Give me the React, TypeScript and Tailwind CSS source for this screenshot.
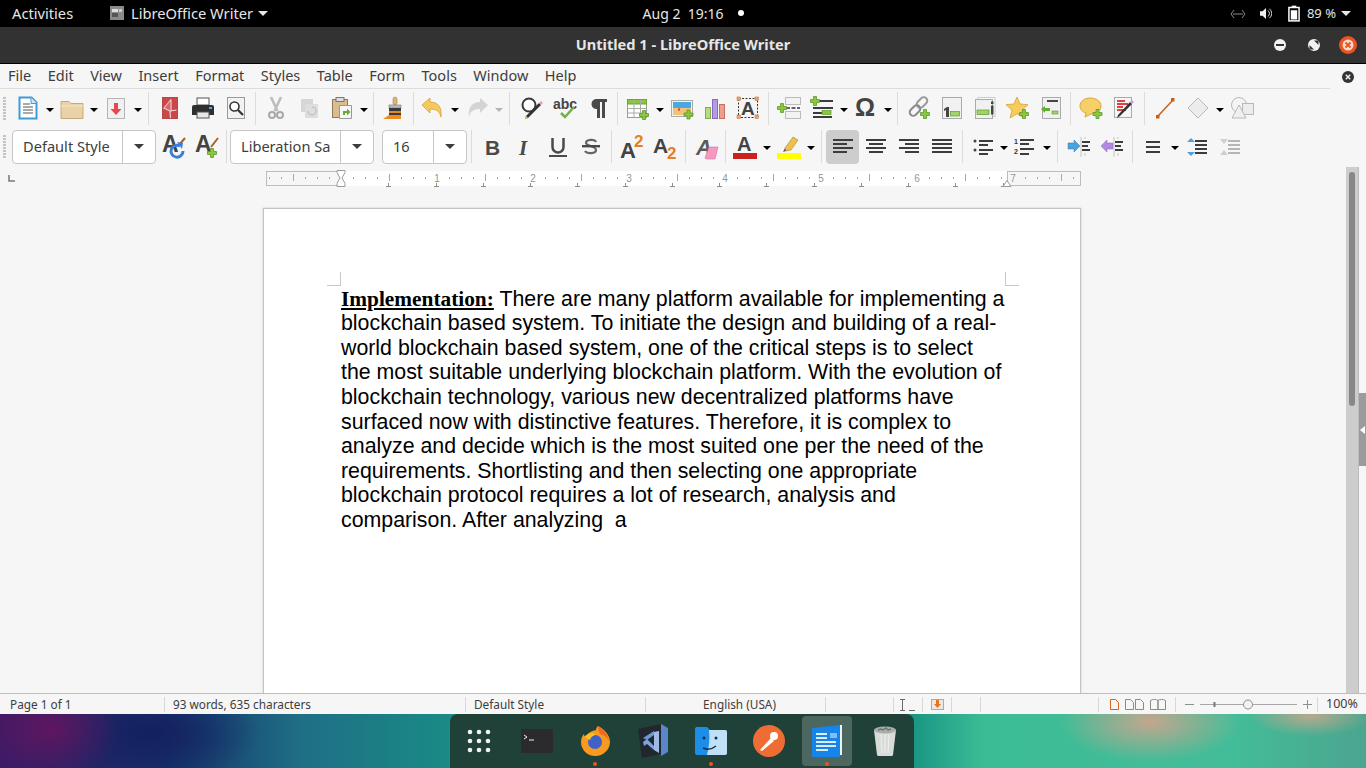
import type { ReactNode } from "react";

const Svg = ({ children, size = 24 }: { children: ReactNode; size?: number }) => (
    <svg width={size} height={size} viewBox="0 0 24 24" fill="none" overflow="visible">
        {children}
    </svg>
);

const Plus = ({ x, y }: { x: number; y: number }) => (
    <path
        d={`M${x - 1.5} ${y - 4.5}h3v3h3v3h-3v3h-3v-3h-3v-3h3z`}
        fill="#8cc63f"
        stroke="#5b9a2a"
        strokeWidth="0.8"
    />
);

const Letter = ({ x = 1, y = 19, size = 22, fill = "#434343" }: { x?: number; y?: number; size?: number; fill?: string }) => (
    <text x={x} y={y} fontSize={size} fontWeight="700" fill={fill} fontFamily="Liberation Sans, sans-serif">
        A
    </text>
);

const Lines = ({ rows, color = "#3c3c3c" }: { rows: [number, number, number][]; color?: string }) => (
    <>
        {rows.map(([x, y, w], i) => (
            <rect key={i} x={x} y={y} width={w} height="2" fill={color} />
        ))}
    </>
);

const icons: Record<string, ReactNode> = {
    newDoc: (
        <>
            <path d="M3.500 1.500h12l5 5v16h-17z" fill="#fff" stroke="#3f9bd8" strokeWidth="2" />
            <path d="M15 1.500v6h6" fill="#cfe6f6" stroke="#3f9bd8" strokeWidth="1" />
            <Lines rows={[[7, 7, 7], [7, 10, 10], [7, 13, 10], [7, 16, 10]]} color="#a9a9a9" />
        </>
    ),
    open: (
        <>
            <path d="M1 5.500h8l2 2h12v15H1z" fill="#e9d2a6" stroke="#c2ab81" />
            <path d="M1 10h22" stroke="#f6e8cc" />
        </>
    ),
    save: (
        <>
            <rect x="3.500" y="2.500" width="17" height="20" fill="#f0f0f0" stroke="#b5b5b5" />
            <path d="M10 7h4v6h3.500L12 19l-5.500-6H10z" fill="#e5484d" />
        </>
    ),
    pdf: (
        <>
            <rect x="4.500" y="1.500" width="15" height="21" fill="#cc4848" stroke="#b24a4a" />
            <path d="M13 3.500L6 12l6 3 .5 7M13 3.500V15M12.500 15l6-1" stroke="#f6dcdc" strokeWidth="1.100" />
            <path d="M6 12l6-8.500V15z" fill="#e88" opacity=".5" />
        </>
    ),
    print: (
        <>
            <rect x="6" y="2" width="12" height="7" fill="#fff" stroke="#555" />
            <path d="M3 9h18a2 2 0 0 1 2 2v8H1v-8a2 2 0 0 1 2-2z" fill="#2f2f2f" />
            <rect x="18" y="11" width="3" height="2" fill="#3fb0e8" />
            <rect x="6" y="16" width="12" height="6" fill="#e8e8e8" stroke="#555" />
        </>
    ),
    preview: (
        <>
            <rect x="3.500" y="1.500" width="17" height="21" fill="#f2f2f2" stroke="#9a9a9a" />
            <circle cx="10.500" cy="10.500" r="4.500" fill="#fff" stroke="#333" strokeWidth="1.600" />
            <path d="M14 14l5 5" stroke="#333" strokeWidth="2.200" />
        </>
    ),
    cut: (
        <>
            <path d="M7 1l6.500 14M17 1l-6.500 14" stroke="#bdbdbd" strokeWidth="2.600" />
            <circle cx="8" cy="19" r="3" stroke="#a8a8a8" strokeWidth="2" />
            <circle cx="16" cy="19" r="3" stroke="#a8a8a8" strokeWidth="2" />
        </>
    ),
    copy: (
        <>
            <rect x="4" y="3" width="12" height="13" fill="#d6d6d6" />
            <rect x="8" y="8" width="13" height="14" fill="#dedede" />
            <path d="M15 11a4 4 0 1 1-4 4" stroke="#c4c4c4" strokeWidth="1.500" />
        </>
    ),
    paste: (
        <>
            <rect x="2.500" y="3.500" width="15" height="18" fill="#d9bd8c" stroke="#8f7b5c" />
            <rect x="6" y="1.500" width="8" height="4" fill="#ddd" stroke="#777" />
            <path d="M9.500 9.500h12v13h-12z" fill="#f7f7f7" stroke="#999" />
            <path d="M13 15h4v-2.500l3.500 3.500-3.500 3.500V17h-2v2h-2z" fill="#63ad2f" />
        </>
    ),
    brush: (
        <>
            <rect x="10" y="1" width="4" height="8" rx="2" fill="#d9b57a" stroke="#a8844e" strokeWidth=".6" />
            <rect x="6" y="9" width="12" height="3" fill="#bbb" stroke="#777" strokeWidth=".6" />
            <path d="M6 12h12v7H6z" fill="#3a3a3a" />
            <path d="M6 15h12v2H6z" fill="#d98a2b" />
            <path d="M0 23c2-1 4-3 6-4h12v4z" fill="#f08a1d" />
        </>
    ),
    undo: <path d="M1 9l8-7v4c8 0 12 5 11 15-1-5-4-8-11-8v4z" fill="#f6c95c" stroke="#d8a030" strokeWidth=".8" />,
    redo: <path d="M23 9l-8-7v4C7 6 3 11 4 21c1-5 4-8 11-8v4z" fill="#d4d4d4" />,
    find: (
        <>
            <circle cx="9" cy="9" r="6.500" fill="#fff" stroke="#3a3a3a" strokeWidth="2" />
            <path d="M21 9L8 22l-3 1 1-3L19 7z" fill="#333" />
            <path d="M19 7l2 2 2-2-2-2z" fill="#e79ad0" />
            <path d="M5 23l1-3 2 2z" fill="#f0d080" />
        </>
    ),
    spell: (
        <>
            <text x="0" y="13" fontSize="14" fontWeight="700" fill="#444" fontFamily="Liberation Sans, sans-serif">
                abc
            </text>
            <path d="M8 17l4 4 9-10" stroke="#72b043" strokeWidth="2.500" />
        </>
    ),
    pilcrow: <path d="M10 3h11v3h-2v16h-3V6h-2v16h-3v-9a5 5 0 0 1-1-10z" fill="#4a4a4a" />,
    table: (
        <>
            <rect x="1.500" y="3.500" width="19" height="18" fill="#fff" stroke="#999" />
            <rect x="1.500" y="3.500" width="19" height="4.500" fill="#8cc63f" stroke="#6ba32e" />
            <path d="M8 3.500v18M14.500 3.500v18M1.500 12.500h19M1.500 17h19" stroke="#aaa" />
            <Plus x={18} y={19} />
        </>
    ),
    image: (
        <>
            <rect x="1.500" y="4.500" width="21" height="16" fill="#f3f3f3" stroke="#aaa" />
            <rect x="3" y="6" width="18" height="6" fill="#4aa7e0" />
            <path d="M3 12h18v7H3z" fill="#f1c27a" />
            <rect x="8" y="12.500" width="2" height="2" fill="#d33" />
            <Plus x={18.500} y={18.500} />
        </>
    ),
    chart: (
        <>
            <rect x="2.500" y="11.500" width="5" height="11" fill="#b5dc7e" stroke="#80ad47" />
            <rect x="9.500" y="3.500" width="5" height="19" fill="#b79be0" stroke="#8a6bc2" />
            <rect x="16.500" y="8.500" width="5" height="14" fill="#eaa08f" stroke="#c9705d" />
        </>
    ),
    textbox: (
        <>
            <rect x="2.500" y="2.500" width="19" height="19" stroke="#333" strokeDasharray="2 1.500" />
            <Letter x={5} y={19} size={19} />
            {[[1, 1], [19, 1], [1, 19], [19, 19]].map(([x, y]) => (
                <rect key={x + "-" + y} x={x} y={y} width="3.500" height="3.500" fill="#f0a070" stroke="#c76b2d" strokeWidth=".5" />
            ))}
        </>
    ),
    pageBreak: (
        <>
            <rect x="8.500" y="1.500" width="15" height="7" fill="#f2f2f2" stroke="#bbb" />
            <rect x="8.500" y="15.500" width="15" height="7" fill="#f2f2f2" stroke="#bbb" />
            <path d="M9 12h14" stroke="#666" strokeWidth="2" strokeDasharray="4 1.500" />
            <Plus x={5} y={12} />
        </>
    ),
    field: (
        <>
            <Lines rows={[[8, 4, 15], [3, 11, 20], [3, 16, 9], [3, 20, 19]]} />
            <Plus x={5} y={5} />
            <rect x="12" y="14.500" width="9" height="4" fill="#8cc63f" stroke="#5b9a2a" strokeWidth=".7" />
        </>
    ),
    omega: (
        <text x="1" y="20" fontSize="25" fontWeight="700" fill="#444" fontFamily="Liberation Sans, sans-serif">
            Ω
        </text>
    ),
    link: (
        <>
            <rect x="9" y="3" width="12" height="7" rx="3.500" transform="rotate(-45 15 6.500)" stroke="#9a9a9a" strokeWidth="2" />
            <rect x="2" y="11" width="12" height="7" rx="3.500" transform="rotate(-45 8 14.500)" stroke="#8a8a8a" strokeWidth="2" />
            <Plus x={18} y={18} />
        </>
    ),
    footnote: (
        <>
            <rect x="2.500" y="1.500" width="19" height="21" fill="#f1f1f1" stroke="#aaa" />
            <path d="M4 13l3-2h2v10H6v-7l-2 1z" fill="#444" />
            <rect x="10.500" y="15.500" width="9" height="4.500" fill="#a4d168" stroke="#5b9a2a" strokeWidth=".7" />
        </>
    ),
    endnote: (
        <>
            <rect x="5" y="1.500" width="17" height="19" fill="#fafafa" stroke="#ccc" />
            <rect x="2.500" y="3.500" width="17" height="19" fill="#f1f1f1" stroke="#aaa" />
            <rect x="4" y="14" width="12" height="4.500" fill="#a4d168" stroke="#5b9a2a" strokeWidth=".7" />
            <rect x="18" y="5.500" width="2.500" height="2.500" fill="#444" />
            <rect x="18" y="9.500" width="2.500" height="9" fill="#444" />
        </>
    ),
    star: (
        <>
            <path d="M11 1l3 7 8 .7-6 5.300 2 8-7-4.300L4 22l2-8-6-5.300L8 8z" fill="#f6cd5a" stroke="#d5a32c" strokeWidth=".8" />
            <Plus x={18} y={18} />
        </>
    ),
    xref: (
        <>
            <rect x="3.500" y="1.500" width="18" height="21" fill="#f1f1f1" stroke="#aaa" />
            <rect x="8" y="4" width="11" height="2" fill="#444" />
            <path d="M2 13l4-3v2h5v3H6v2z" fill="#63ad2f" />
            <rect x="13" y="15" width="6" height="3" fill="#a4d168" stroke="#5b9a2a" strokeWidth=".6" />
        </>
    ),
    comment: (
        <>
            <path d="M11 2c6 0 11 3 11 8s-5 8-10 8l-6 3 1-4c-4-1-6-4-6-7 0-5 5-8 10-8z" fill="#f6cf68" stroke="#d8a938" />
            <Plus x={18.500} y={18} />
        </>
    ),
    track: (
        <>
            <rect x="2.500" y="1.500" width="17" height="20" fill="#f6f6f6" stroke="#aaa" />
            <Lines rows={[[5, 4, 8], [5, 7, 11], [5, 10, 6], [5, 13, 9]]} color="#e04040" />
            <path d="M20 8L8 20l-3 2 1-3L18 6z" fill="#333" />
            <path d="M18 6l2 2 2-2-2-2z" fill="#d99ad0" />
        </>
    ),
    line: (
        <>
            <path d="M5 20L20 4" stroke="#c85f14" strokeWidth="1.400" />
            <rect x="18" y="2" width="3.500" height="3.500" fill="#c85f14" />
            <rect x="3" y="19" width="3.500" height="3.500" fill="#c85f14" />
        </>
    ),
    diamond: <path d="M12 2l10 10-10 10L2 12z" fill="#ececec" stroke="#b8b8b8" />,
    shapes: (
        <>
            <circle cx="9" cy="9" r="7.500" fill="#f4f4f4" stroke="#b8b8b8" />
            <rect x="12.500" y="7.500" width="11" height="11" fill="#ececec" stroke="#b8b8b8" />
            <path d="M9 9l7 13H2z" fill="#f0f0f0" stroke="#b8b8b8" />
        </>
    ),
    updateStyle: (
        <>
            <Letter x={0} y={17} size={23} />
            <path d="M23 3l-6 7" stroke="#a5622a" strokeWidth="2" />
            <path d="M21 16a6 6 0 1 1-3-5" stroke="#3b7fd9" strokeWidth="3" />
            <path d="M15 7l6 1-1 6z" fill="#3b7fd9" />
        </>
    ),
    newStyle: (
        <>
            <Letter x={0} y={17} size={23} />
            <path d="M23 3l-7 9" stroke="#a5622a" strokeWidth="2" />
            <Plus x={17} y={18} />
        </>
    ),
    bold: (
        <text x="5" y="20" fontSize="21" fontWeight="700" fill="#4a4a4a" fontFamily="Liberation Sans, sans-serif">
            B
        </text>
    ),
    italic: (
        <text x="6" y="20" fontSize="21" fontWeight="700" fontStyle="italic" fill="#4a4a4a" fontFamily="Liberation Serif, serif">
            I
        </text>
    ),
    underline: (
        <>
            <path d="M6.500 3v9a5.500 5.500 0 0 0 11 0V3" stroke="#4a4a4a" strokeWidth="2.500" />
            <rect x="3" y="20" width="18" height="2" fill="#4a4a4a" />
        </>
    ),
    strike: (
        <>
            <path d="M17 7c-1-3-10-3-10 1 0 3 10 3 10 7 0 4-9 4-11 1" stroke="#666" strokeWidth="2.200" />
            <rect x="3" y="10" width="18" height="2.400" fill="#4a4a4a" />
        </>
    ),
    sup: (
        <>
            <Letter x={0} y={23} size={22} />
            <text x="14" y="12" fontSize="17" fontWeight="700" fill="#e67e22" fontFamily="Liberation Sans, sans-serif">
                2
            </text>
        </>
    ),
    sub: (
        <>
            <Letter x={0} y={18} size={21} />
            <text x="14" y="24" fontSize="17" fontWeight="700" fill="#e67e22" fontFamily="Liberation Sans, sans-serif">
                2
            </text>
        </>
    ),
    clear: (
        <>
            <text x="2" y="20" fontSize="22" fontWeight="700" fontStyle="italic" fill="#5a5a5a" fontFamily="Liberation Sans, sans-serif">
                A
            </text>
            <path d="M11 23l4-11h9l-3 12h-9z" fill="#f29ac2" stroke="#de6fa3" strokeWidth=".6" />
        </>
    ),
    fontColor: (
        <>
            <Letter x={4} y={16} size={20} />
            <rect x="0" y="18" width="24" height="6" fill="#c9211e" />
        </>
    ),
    highlight: (
        <>
            <path d="M8 13L16 2l5 3-7 10-5 1z" fill="#eac14f" stroke="#b8922c" strokeWidth=".7" />
            <path d="M8 13l1 3-3 1z" fill="#555" />
            <rect x="0" y="18" width="24" height="6" fill="#ffff00" />
        </>
    ),
    alignLeft: <Lines rows={[[2, 4, 20], [2, 8, 14], [2, 12, 20], [2, 16, 14]]} />,
    alignCenter: <Lines rows={[[2, 4, 20], [5, 8, 14], [2, 12, 20], [5, 16, 14]]} />,
    alignRight: <Lines rows={[[2, 4, 20], [8, 8, 14], [2, 12, 20], [8, 16, 14]]} />,
    justify: <Lines rows={[[2, 4, 20], [2, 8, 20], [2, 12, 20], [2, 16, 20]]} />,
    bullets: (
        <>
            <circle cx="4" cy="6" r="1.500" fill="#444" />
            <circle cx="4" cy="15" r="1.500" fill="#444" />
            <Lines rows={[[8, 5, 14], [8, 9, 9], [8, 14, 14], [8, 18, 9]]} />
        </>
    ),
    numbering: (
        <>
            <text x="1" y="9" fontSize="7" fontWeight="700" fill="#333" fontFamily="Liberation Sans, sans-serif">
                1
            </text>
            <text x="1" y="19" fontSize="7" fontWeight="700" fill="#333" fontFamily="Liberation Sans, sans-serif">
                2
            </text>
            <Lines rows={[[7, 4, 14], [7, 8, 9], [7, 13, 14], [7, 18, 9]]} />
        </>
    ),
    indentInc: (
        <>
            <Lines rows={[[15, 6, 8], [15, 10, 6], [15, 14, 8]]} />
            <path d="M14 2v20M18 2v2M18 18v3" stroke="#c4c4c4" />
            <path d="M1 8h6V5l6 6-6 6v-3H1z" fill="#4aa3df" stroke="#3178b5" strokeWidth=".5" />
        </>
    ),
    indentDec: (
        <>
            <Lines rows={[[15, 6, 8], [15, 10, 6], [15, 14, 8]]} />
            <path d="M14 2v20M18 2v2M18 18v3" stroke="#c4c4c4" />
            <path d="M13 8H7V5l-6 6 6 6v-3h6z" fill="#b28be0" stroke="#8b62c0" strokeWidth=".5" />
        </>
    ),
    spacing: <Lines rows={[[5, 6, 14], [5, 11, 14], [5, 16, 14]]} />,
    paraInc: (
        <>
            <Lines rows={[[10, 5, 12], [10, 9, 12], [10, 13, 12], [10, 17, 12]]} />
            <path d="M6 3l4 4H2zM6 21l4-4H2z" fill="#4aa3df" />
        </>
    ),
    paraDec: (
        <>
            <Lines rows={[[10, 5, 12], [10, 9, 12], [10, 13, 12], [10, 17, 12]]} color="#b5b5b5" />
            <path d="M2 4h8l-4 5zM2 20h8l-4-5z" fill="#cfcfcf" />
        </>
    ),
};

const Tool = ({ name, active }: { name: string; active?: boolean }) => (
    <div className={`flex h-[34px] w-[33px] items-center justify-center rounded ${active ? "bg-[#cdcdcd]" : ""}`}>
        <Svg>{icons[name]}</Svg>
    </div>
);

const Caret = ({ dim, narrow }: { dim?: boolean; narrow?: boolean }) => (
    <div className={`flex items-center justify-center pt-[3px] ${narrow ? "w-[9px]" : "w-[11px]"}`}>
        <div
            className={`h-0 w-0 border-x-[4px] border-t-[4px] border-x-transparent ${dim ? "border-t-[#b5b5b5]" : "border-t-black"}`}
        />
    </div>
);

const Sep = ({ className }: { className: string }) => (
    <div className={`flex h-[33px] justify-center ${className}`}>
        <div className="h-full w-px bg-[#dcdcdc]" />
    </div>
);

const Grip = () => (
    <div className="flex w-[5px] flex-col gap-[1px]">
        {[0, 1, 2, 3, 4, 5, 6, 7].map((i) => (
            <div key={i} className="h-[2px] w-[3px] bg-[#c4c4c4]" />
        ))}
    </div>
);

const Combo = ({ label, width, field }: { label: string; width: string; field: string }) => (
    <div className={`flex h-[34px] items-center rounded-[4px] border border-[#c6c6c6] bg-white text-[14.6px] text-[#3d3d3d] ${width}`}>
        <div className={`whitespace-nowrap pl-[10px] ${field}`}>{label}</div>
        <div className="flex h-full flex-1 items-center justify-center border-l border-[#c6c6c6]">
            <div className="h-0 w-0 border-x-[5px] border-t-[5px] border-x-transparent border-t-[#3d3d3d]" />
        </div>
    </div>
);

const Ruler = () => {
    const minor = Array.from({ length: 68 }, (_, i) => i * 12 + 3);
    const tabs = Array.from({ length: 14 }, (_, i) => 75 + 47.25 * (i + 1));
    return (
        <svg width="816" height="18" viewBox="0 0 816 18" fill="none">
            <rect x="75" y="1" width="666" height="15" fill="#fff" />
            <rect x="0.500" y="1.500" width="74" height="14" stroke="#bcbcbc" />
            <rect x="741.500" y="1.500" width="73" height="14" stroke="#bcbcbc" />
            {minor.map((x) => {
                const n = Math.round((x - 75 + 96 * 3) / 12);
                if (n % 8 === 0) return null;
                const long = n % 4 === 0;
                return <path key={x} d={`M${x + 0.5} ${long ? 4 : 7}v${long ? 7 : 2}`} stroke="#a8a8a8" />;
            })}
            {tabs.map((x) => (
                <path key={x} d={`M${Math.round(x) + 0.5} 13v3M${Math.round(x) - 2} 16.500h5`} stroke="#8e8e8e" />
            ))}
            {[1, 2, 3, 4, 5, 6, 7].map((n) => (
                <text key={n} x={75 + n * 96} y="12" fontSize="10" textAnchor="middle" fill="#8b98a8" fontFamily="Liberation Sans, sans-serif">
                    {n}
                </text>
            ))}
            <path d="M71 0.500h8v2l-3 5.500 3 5.500v3h-8v-3l3-5.500-3-5.500z" fill="#fff" stroke="#9a9a9a" />
            <path d="M737 16.500l4-6 4 6z" fill="#fff" stroke="#9a9a9a" />
        </svg>
    );
};

const docLines = [
    "blockchain based system. To initiate the design and building of a real-",
    "world blockchain based system, one of the critical steps is to select",
    "the most suitable underlying blockchain platform. With the evolution of",
    "blockchain technology, various new decentralized platforms have",
    "surfaced now with distinctive features. Therefore, it is complex to",
    "analyze and decide which is the most suited one per the need of the",
    "requirements. Shortlisting and then selecting one appropriate",
    "blockchain protocol requires a lot of research, analysis and",
    "comparison. After analyzing  a",
];

const Page = () => (
    <div className="relative h-[600px] w-[818px] border border-[#c4c4c4] bg-white pl-[77px] pt-[77.88px] font-['Liberation_Sans',sans-serif] text-[21.33px] leading-[24.53px] text-black shadow-[0_0_2px_rgba(0,0,0,0.2)]">
        <div className="absolute left-[63px] top-[63px] h-[14px] w-[14px] border-b border-r border-[#c8c8c8]" />
        <div className="absolute left-[741px] top-[63px] h-[14px] w-[14px] border-b border-l border-[#c8c8c8]" />
        <div className="whitespace-pre">
            <span className="font-['Liberation_Serif',serif] font-bold underline">Implementation:</span> There are many platform available for implementing a
        </div>
        {docLines.map((line) => (
            <div key={line} className="whitespace-pre">
                {line}
            </div>
        ))}
    </div>
);

const StatusCell = ({ width, children, center }: { width: string; children?: ReactNode; center?: boolean }) => (
    <div className={`flex h-full items-center ${width}`}>
        <div className={`flex h-[15px] w-full items-center gap-[3px] border-l border-[#d8d8d8] pl-[8px] ${center ? "justify-center pl-0" : ""}`}>
            {children}
        </div>
    </div>
);

const PageGlyph = ({ color = "#8a8a8a", double }: { color?: string; double?: boolean }) => (
    <svg width={double ? 19 : 9} height="11" viewBox={double ? "0 0 19 11" : "0 0 9 11"} fill="none">
        <path d="M0.500 0.500h5l3 3v7h-8z" stroke={color} />
        {double && <path d="M10.500 0.500h5l3 3v7h-8z" stroke={color} />}
    </svg>
);

const StatusBar = () => (
    <div className="flex h-[21px] shrink-0 items-center border-t border-[#bdbdbd] bg-[#f6f6f6] pt-[1px] text-[11.8px] text-[#3d3d3d]">
        <div className="w-[164px] whitespace-nowrap pl-[10px]">Page 1 of 1</div>
        <StatusCell width="w-[301px]">93 words, 635 characters</StatusCell>
        <StatusCell width="w-[180px]">Default Style</StatusCell>
        <StatusCell width="w-[180px]" center>
            English (USA)
        </StatusCell>
        <StatusCell width="w-[68px]" />
        <StatusCell width="w-[29px]">
            <svg width="16" height="12" viewBox="0 0 16 12" fill="none" className="-ml-[2px]">
                <path d="M0 0.500h5M2.500 0.500v11M0 11.500h5M9 11.500h6" stroke="#6a6a6a" />
            </svg>
        </StatusCell>
        <StatusCell width="w-[29px]">
            <svg width="13" height="11" viewBox="0 0 13 11" fill="none">
                <rect x="0.500" y="0.500" width="12" height="10" fill="#e9e9e9" stroke="#aaa" />
                <path d="M5 1h3v4h2L6.500 9 3 5h2z" fill="#e8741a" />
            </svg>
        </StatusCell>
        <StatusCell width="w-[29px]" />
        <StatusCell width="w-[118px]" />
        <StatusCell width="w-[77px]">
            <div className="flex items-center gap-[6px] pl-[3px]">
                <PageGlyph color="#d9651a" />
                <PageGlyph double />
                <svg width="16" height="11" viewBox="0 0 16 11" fill="none">
                    <path d="M8 1.500C6 0 3 0 0.500 1.500v9H8zM8 1.500C10 0 13 0 15.500 1.500v9H8z" stroke="#8a8a8a" />
                </svg>
            </div>
        </StatusCell>
        <StatusCell width="w-[142px]">
            <svg width="128" height="13" viewBox="0 0 128 13" fill="none" className="ml-[1px]">
                <path d="M0 6.500h9M118 6.500h9M122.500 2v9" stroke="#8e8e8e" />
                <path d="M15 6.500h97" stroke="#a8a8a8" />
                <path d="M29.500 4v5" stroke="#777" strokeWidth="2" />
                <circle cx="63" cy="6.500" r="4.500" fill="#f2f2f2" stroke="#8e8e8e" />
            </svg>
        </StatusCell>
        <div className="flex h-[15px] flex-1 items-center border-l border-[#d8d8d8] pl-[8px] text-[12.5px]">100%</div>
    </div>
);

const Gnome = ({ kind }: { kind: "min" | "max" | "close" }) => {
    if (kind === "close") {
        return (
            <svg width="18" height="18" viewBox="0 0 18 18">
                <circle cx="9" cy="9" r="9" fill="#e95420" />
                <circle cx="9" cy="9" r="5.500" fill="#f8d9cc" />
                <path d="M6.500 6.500l5 5M11.500 6.500l-5 5" stroke="#e95420" strokeWidth="1.800" />
            </svg>
        );
    }
    return (
        <svg width="18" height="18" viewBox="0 0 18 18">
            <circle cx="9" cy="9" r="6" fill="#f2f2f2" />
            {kind === "min" ? (
                <rect x="5" y="8" width="8" height="2" fill="#333" />
            ) : (
                <path d="M9 4.500h4.500V9zM9 13.500H4.500V9z" fill="#333" />
            )}
        </svg>
    );
};

const TopBar = () => (
    <div className="grid h-[27px] shrink-0 grid-cols-[1fr_auto_1fr] items-center bg-black text-[14.7px] text-[#e6e6e6]">
        <div className="flex items-center pl-[12px]">
            <span className="w-[98px]">Activities</span>
            <svg width="14" height="14" viewBox="0 0 14 14" className="mr-[7px]">
                <rect width="14" height="14" fill="#8a8a8a" />
                <rect x="2" y="3" width="6" height="3" fill="#ddd" />
                <rect x="2" y="7" width="6" height="4" fill="#555" />
                <rect x="9" y="3" width="3" height="3" fill="#ccc" />
            </svg>
            <span>LibreOffice Writer</span>
            <div className="ml-[5px] h-0 w-0 border-x-[5px] border-t-[5px] border-x-transparent border-t-[#e6e6e6]" />
        </div>
        <div className="relative text-[14px]">
            Aug 2&nbsp;&nbsp;19:16
            <div className="absolute left-[95px] top-[7px] h-[6px] w-[6px] rounded-full bg-white" />
        </div>
        <div className="flex items-center justify-end pr-[15px]">
            <svg width="16" height="10" viewBox="0 0 16 10" fill="none" className="mr-[14px]">
                <path d="M4 1L1 5l3 4M12 1l3 4-3 4M3 5h10" stroke="#8a8a8a" />
            </svg>
            <svg width="12" height="13" viewBox="0 0 14 13" className="mr-[16px]">
                <path d="M0 4h3l4-4v13L3 9H0z" fill="#eee" />
                <path d="M9 3a4 4 0 0 1 0 7M11 1a7 7 0 0 1 0 11" stroke="#eee" fill="none" />
            </svg>
            <svg width="12" height="17" viewBox="0 0 13 17" fill="none" className="mr-[7px]">
                <rect x="4" y="0" width="5" height="2" fill="#fff" />
                <rect x="1" y="2" width="11" height="14.500" stroke="#fff" strokeWidth="1.600" />
                <rect x="3" y="5" width="7" height="10" fill="#fff" />
            </svg>
            <span className="text-[13px]">89 %</span>
            <div className="ml-[5px] h-0 w-0 border-x-[5px] border-t-[5px] border-x-transparent border-t-[#e6e6e6]" />
        </div>
    </div>
);

const TitleBar = () => (
    <div className="relative flex h-[37px] shrink-0 items-center justify-center border-b border-black bg-[#333232] text-[14.6px] font-bold text-[#e6e6e6]">
        Untitled 1 - LibreOffice Writer
        <div className="absolute right-[9px] top-[9px] flex gap-[16px]">
            <Gnome kind="min" />
            <Gnome kind="max" />
            <Gnome kind="close" />
        </div>
    </div>
);

const menus = ["File", "Edit", "View", "Insert", "Format", "Styles", "Table", "Form", "Tools", "Window", "Help"];

const MenuBar = () => (
    <div className="flex h-[25px] shrink-0 items-center bg-[#f6f6f6] text-[14.5px] text-[#3d3d3d]">
        <div className="flex h-full w-[1330px] items-center gap-[16.5px] border-b border-[#dcdcdc] pl-[8px]">
            {menus.map((m) => (
                <span key={m}>{m}</span>
            ))}
        </div>
        <svg width="12" height="12" viewBox="0 0 12 12" className="ml-[12px]">
            <circle cx="6" cy="6" r="6" fill="#333" />
            <path d="M3.800 3.800l4.400 4.400M8.200 3.800l-4.400 4.400" stroke="#eee" strokeWidth="1.500" />
        </svg>
    </div>
);

const ToolbarOne = () => (
    <div className="flex h-[38px] shrink-0 items-center bg-[#f6f6f6] pl-[3px]">
        <Grip />
        <div className="w-[3px]" />
        <Tool name="newDoc" />
        <Caret />
        <Tool name="open" />
        <Caret />
        <Tool name="save" />
        <Caret />
        <Sep className="w-[10px]" />
        <Tool name="pdf" />
        <Tool name="print" />
        <Tool name="preview" />
        <Sep className="w-[7px]" />
        <Tool name="cut" />
        <Tool name="copy" />
        <Tool name="paste" />
        <Caret />
        <Sep className="w-[9px]" />
        <Tool name="brush" />
        <Sep className="w-[5px]" />
        <Tool name="undo" />
        <Caret />
        <Tool name="redo" />
        <Caret dim />
        <Sep className="w-[11px]" />
        <Tool name="find" />
        <Tool name="spell" />
        <Tool name="pilcrow" />
        <Sep className="w-[7px]" />
        <Tool name="table" />
        <Caret />
        <Tool name="image" />
        <Tool name="chart" />
        <Tool name="textbox" />
        <Sep className="w-[8px]" />
        <Tool name="pageBreak" />
        <Tool name="field" />
        <Caret />
        <Tool name="omega" />
        <Caret />
        <Sep className="w-[9px]" />
        <Tool name="link" />
        <Tool name="footnote" />
        <Tool name="endnote" />
        <Tool name="star" />
        <Tool name="xref" />
        <Sep className="w-[7px]" />
        <Tool name="comment" />
        <Tool name="track" />
        <Sep className="w-[8px]" />
        <Tool name="line" />
        <Tool name="diamond" />
        <Caret />
        <Tool name="shapes" />
    </div>
);

const ToolbarTwo = () => (
    <div className="flex h-[40px] shrink-0 items-center bg-[#f6f6f6] pb-[1px] pl-[3px]">
        <Grip />
        <div className="w-[4px]" />
        <Combo label="Default Style" width="w-[144px]" field="w-[109px]" />
        <div className="w-px" />
        <Tool name="updateStyle" />
        <Tool name="newStyle" />
        <Sep className="w-[7px]" />
        <Combo label="Liberation Sa" width="w-[144px]" field="w-[109px]" />
        <div className="w-[8px]" />
        <Combo label="16" width="w-[85px]" field="w-[50px]" />
        <Sep className="w-[8px]" />
        <Tool name="bold" />
        <Tool name="italic" />
        <Tool name="underline" />
        <Tool name="strike" />
        <Sep className="w-[8px]" />
        <Tool name="sup" />
        <Tool name="sub" />
        <Sep className="w-[8px]" />
        <Tool name="clear" />
        <Sep className="w-[6px]" />
        <Tool name="fontColor" />
        <Caret />
        <Tool name="highlight" />
        <Caret />
        <Sep className="w-[10px]" />
        <Tool name="alignLeft" active />
        <Tool name="alignCenter" />
        <Tool name="alignRight" />
        <Tool name="justify" />
        <Sep className="w-[8px]" />
        <Tool name="bullets" />
        <Caret narrow />
        <Tool name="numbering" />
        <Caret />
        <Sep className="w-[10px]" />
        <Tool name="indentInc" />
        <Tool name="indentDec" />
        <Sep className="w-[8px]" />
        <Tool name="spacing" />
        <Caret />
        <Tool name="paraInc" />
        <Tool name="paraDec" />
    </div>
);

const Workspace = () => (
    <div className="flex min-h-0 flex-1 bg-[#f6f6f6]">
        <div className="flex min-w-0 flex-1 flex-col overflow-hidden">
            <div className="flex h-[23px] shrink-0 items-start">
                <svg width="8" height="8" viewBox="0 0 8 8" className="ml-[8px] mt-[8px]">
                    <path d="M1 0v6h6" stroke="#777" strokeWidth="1.500" fill="none" />
                </svg>
                <div className="ml-[250px] mt-[3px]">
                    <Ruler />
                </div>
            </div>
            <div className="pl-[263px] pt-[18px]">
                <Page />
            </div>
        </div>
        <div className="flex w-[12px] shrink-0 justify-center bg-[#cdcdcd] pt-[5px]">
            <div className="h-[234px] w-[6px] rounded-[3px] bg-[#888888]" />
        </div>
        <div className="flex w-[8px] shrink-0 flex-col border-l border-[#bcbcbc] bg-[#f6f6f6] pt-[226px]">
            <div className="flex h-[73px] w-full items-center justify-center bg-[#9b9b9b]">
                <div className="h-0 w-0 border-y-[4px] border-r-[5px] border-y-transparent border-r-white" />
            </div>
        </div>
    </div>
);

const DockItem = ({ children, running, active }: { children: ReactNode; running?: boolean; active?: boolean }) => (
    <div className="relative flex h-full w-[58px] items-center justify-center">
        {active && <div className="absolute left-[4px] top-[2px] h-[50px] w-[50px] rounded-[4px] bg-white/20" />}
        <div className="relative">{children}</div>
        {running && <div className="absolute bottom-[2px] left-[27px] h-[4px] w-[4px] rounded-full bg-[#e95420]" />}
    </div>
);

const Dock = () => (
    <div className="flex h-full w-[464px] rounded-t-[8px] bg-[#1f4138]">
        <DockItem>
            <svg width="24" height="24" viewBox="0 0 24 24" fill="#f2f2f2">
                {[3, 12, 21].flatMap((y) =>
                    [3, 12, 21].map((x) => <circle key={x + "-" + y} cx={x} cy={y} r="2.300" />),
                )}
            </svg>
        </DockItem>
        <DockItem>
            <svg width="32" height="24" viewBox="0 0 32 24">
                <rect width="32" height="24" rx="1" fill="#2b2b2d" />
                <path d="M3 6l3 2-3 2" stroke="#eee" fill="none" />
                <path d="M8 11h5" stroke="#eee" />
            </svg>
        </DockItem>
        <DockItem running>
            <svg width="30" height="32" viewBox="0 0 30 32">
                <path d="M15 31a14 14 0 0 1-14-14c0-3 1-6 3-8 0 2 1 3 2 4 1-5 5-7 10-8 0-2 1-3 2-4 6 3 12 9 12 16a14.500 14.500 0 0 1-15 14z" fill="#f79a1f" />
                <path d="M18 1c5 3 10 8 11 15-2-4-5-6-9-7-1-2-2-5-2-8z" fill="#f2691d" />
                <circle cx="15" cy="17" r="7" fill="#3f62c9" />
                <path d="M4 12c3-3 7-5 12-3-2 2-5 2-6 6z" fill="#fbbf24" />
            </svg>
        </DockItem>
        <DockItem>
            <svg width="32" height="34" viewBox="0 0 32 34">
                <path d="M1 5l23-5v30L5 34z" fill="#22262e" />
                <path d="M24 0l7 4v24l-7 4z" fill="#5b86c9" />
                <path d="M6 18l4-3 7 7v4l-7-6-3 2z" fill="#7da4dc" />
                <path d="M17 8l5-1v22l-5-3z" fill="#9dbbe6" />
                <path d="M6 14l11-7v4l-7 5z" fill="#6f96d3" />
            </svg>
        </DockItem>
        <DockItem running>
            <svg width="32" height="28" viewBox="0 0 32 28">
                <path d="M0 2a2 2 0 0 1 2-2h10l3 3h15a2 2 0 0 1 2 2v21a2 2 0 0 1-2 2H2a2 2 0 0 1-2-2z" fill="#1d8ee8" />
                <path d="M14 3h16a2 2 0 0 1 2 2v21a2 2 0 0 1-2 2H12c2-8 3-16 2-25z" fill="#bfe0f6" />
                <circle cx="9" cy="11" r="1.500" fill="#12314f" />
                <circle cx="21" cy="11" r="1.500" fill="#12314f" />
                <path d="M8 21c4 2 8 2 13-2" stroke="#12314f" strokeWidth="1.500" fill="none" />
            </svg>
        </DockItem>
        <DockItem>
            <svg width="32" height="32" viewBox="0 0 32 32">
                <circle cx="16" cy="16" r="16" fill="#ef6c35" />
                <path d="M7 25l11-12 3 3-12 10z" fill="#fff" />
                <circle cx="21" cy="11" r="4" fill="#fff" />
            </svg>
        </DockItem>
        <DockItem running active>
            <svg width="30" height="32" viewBox="0 0 30 32">
                <path d="M0 3l28-3v32H0z" fill="#1684e8" />
                <rect x="28" y="0" width="2" height="30" fill="#eaf4fd" />
                <rect x="18" y="8" width="7" height="5" fill="#7ec0f5" />
                <path d="M4 8h11v2H4zM4 12h11v2H4zM4 16h20v2H4zM4 20h20v2H4zM4 24h12v2H4z" fill="#d9edfc" />
            </svg>
        </DockItem>
        <DockItem>
            <svg width="24" height="30" viewBox="0 0 24 30">
                <path d="M1 4h22l-3 25a2 2 0 0 1-2 1H6a2 2 0 0 1-2-1z" fill="#d8dcd9" />
                <path d="M8 8l1 19M12 8v19M16 8l-1 19" stroke="#eef0ee" />
                <ellipse cx="12" cy="4" rx="11" ry="3.500" fill="#a9aeab" />
                <path d="M5 4l3-1 2 1 3-2 2 2 3-1" stroke="#6e7370" strokeWidth="1.500" fill="none" />
            </svg>
        </DockItem>
    </div>
);

export default function App() {
    return (
        <div className="flex h-[768px] w-[1366px] flex-col overflow-hidden font-['Noto_Sans',sans-serif]">
            <TopBar />
            <TitleBar />
            <MenuBar />
            <ToolbarOne />
            <ToolbarTwo />
            <Workspace />
            <StatusBar />
            <div className="flex h-[54px] shrink-0 justify-center bg-[radial-gradient(ellipse_70px_50px_at_50px_15px,#5f1660_0%,transparent_100%),radial-gradient(ellipse_110px_50px_at_150px_20px,#14205f_0%,transparent_100%),radial-gradient(ellipse_90px_40px_at_1150px_8px,#c4a68e_0%,transparent_100%),radial-gradient(ellipse_60px_20px_at_1310px_2px,#b8a98c_0%,transparent_100%),linear-gradient(90deg,#3c1a66_0%,#14306a_12%,#1f6f85_22%,#1a8b85_33%,#149080_66%,#3cbc95_72%,#43bd99_90%,#4ca58f_100%)] pr-[2px]">
                <Dock />
            </div>
        </div>
    );
}
